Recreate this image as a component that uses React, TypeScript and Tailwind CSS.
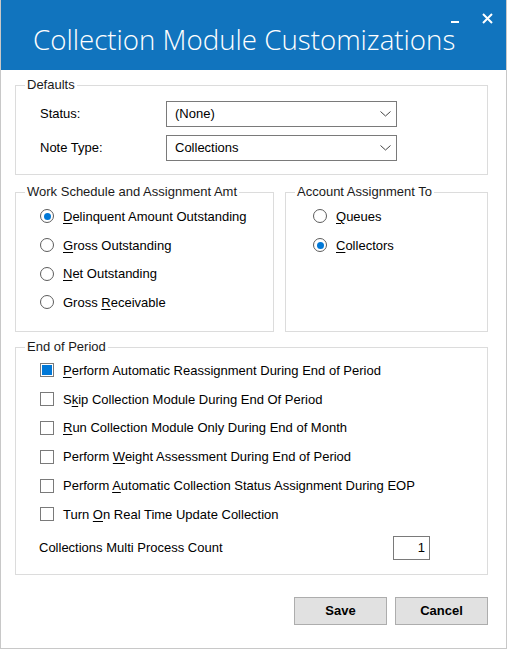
import React from 'react'

const ui = { fontFamily: '"Liberation Sans", Arial, sans-serif' }

function Mn({ text, at }: { text: string; at: number }) {
  // underline the mnemonic letter
  return (
    <>
      {text.slice(0, at)}
      <u className="underline-offset-[2px]">{text[at]}</u>
      {text.slice(at + 1)}
    </>
  )
}

function Radio({ checked, children }: { checked?: boolean; children: React.ReactNode }) {
  return (
    <div className="h-[28.7px] flex items-center gap-[9px]">
      <span className="w-[14px] h-[14px] rounded-full border border-[#5c5c5c] bg-white flex items-center justify-center shrink-0">
        {checked && <span className="w-[7px] h-[7px] rounded-full bg-[#0078d7]" />}
      </span>
      <span className="text-[13px] text-black leading-[15px]">{children}</span>
    </div>
  )
}

function Check({ checked, children }: { checked?: boolean; children: React.ReactNode }) {
  return (
    <div className="h-[28.8px] flex items-center gap-[9px]">
      <span className="w-[14px] h-[14px] border border-[#7a7a7a] bg-white flex items-center justify-center shrink-0">
        {checked && <span className="w-[10px] h-[10px] bg-[#0078d7]" />}
      </span>
      <span className="text-[13px] text-black leading-[15px]">{children}</span>
    </div>
  )
}

function Select({ value }: { value: string }) {
  return (
    <div className="w-[231px] h-[26px] border border-[#7a7a7a] bg-white flex items-center justify-between pl-[8px] pr-[5px]">
      <span className="text-[13px] text-black">{value}</span>
      <svg width="11" height="6" viewBox="0 0 11 6" fill="none">
        <path d="M0.5 0.5 L5.5 5 L10.5 0.5" stroke="#444" strokeWidth="1" />
      </svg>
    </div>
  )
}

function Group({ title, className, children }: { title: string; className?: string; children: React.ReactNode }) {
  return (
    <fieldset className={`border border-[#dcdcdc] pl-[9px] ${className ?? ''}`}>
      <legend className="px-[2px] text-[13px] leading-[14px] text-[#1a1a1a]">{title}</legend>
      {children}
    </fieldset>
  )
}

export default function App() {
  return (
    <div style={ui} className="w-[509px] h-[650px] bg-white">
      <div className="w-[507px] h-[649px] border-x border-b border-[#c8c8c8] bg-white flex flex-col">
        {/* title bar */}
        <div className="relative h-[70px] bg-[#1174be] shrink-0 flex items-end pl-[32px] pb-[16px]">
          <h1
            style={{ fontFamily: '"Open Sans", sans-serif' }}
            className="text-white text-[27.7px] font-light leading-none"
          >
            Collection Module Customizations
          </h1>
          <span className="absolute left-[450px] top-[21px] w-[8px] h-[2px] bg-white" />
          <svg className="absolute left-[481px] top-[13px]" width="11" height="11" viewBox="0 0 11 11">
            <path d="M1 1 L10 10 M10 1 L1 10" stroke="white" strokeWidth="2" />
          </svg>
        </div>

        <div className="pl-[14px] w-[487px] flex flex-col">
          {/* Defaults */}
          <Group title="Defaults" className="mt-[8px] pb-[13px]">
            <div className="pl-[15px] pt-[9px] flex flex-col gap-[8px]">
              <div className="flex items-center">
                <span className="w-[126px] text-[13px] text-black">Status:</span>
                <Select value="(None)" />
              </div>
              <div className="flex items-center">
                <span className="w-[126px] text-[13px] text-black">Note Type:</span>
                <Select value="Collections" />
              </div>
            </div>
          </Group>

          <div className="mt-[10px] flex gap-[11px]">
            <Group title="Work Schedule and Assignment Amt" className="w-[259px] h-[147px]">
              <div className="pl-[15px] pt-[3px]">
                <Radio checked><Mn text="Delinquent Amount Outstanding" at={0} /></Radio>
                <Radio><Mn text="Gross Outstanding" at={0} /></Radio>
                <Radio><Mn text="Net Outstanding" at={0} /></Radio>
                <Radio><Mn text="Gross Receivable" at={6} /></Radio>
              </div>
            </Group>
            <Group title="Account Assignment To" className="w-[203px] h-[147px]">
              <div className="pl-[18px] pt-[3px]">
                <Radio><Mn text="Queues" at={0} /></Radio>
                <Radio checked><Mn text="Collectors" at={0} /></Radio>
              </div>
            </Group>
          </div>

          <Group title="End of Period" className="mt-[8px] pb-[13px]">
            <div className="pl-[15px] pt-[2px]">
              <Check checked><Mn text="Perform Automatic Reassignment During End of Period" at={0} /></Check>
              <Check><Mn text="Skip Collection Module During End Of Period" at={1} /></Check>
              <Check><Mn text="Run Collection Module Only During End of Month" at={0} /></Check>
              <Check><Mn text="Perform Weight Assessment During End of Period" at={8} /></Check>
              <Check><Mn text="Perform Automatic Collection Status Assignment During EOP" at={8} /></Check>
              <Check><Mn text="Turn On Real Time Update Collection" at={5} /></Check>
              <div className="mt-[6px] h-[26px] flex items-center justify-between pr-[57px]">
                <span className="text-[13px] text-black -ml-[1px]">Collections Multi Process Count</span>
                <div className="w-[37px] h-[24px] border border-[#7a7a7a] flex items-center justify-end pr-[4px] text-[13px] text-black">
                  1
                </div>
              </div>
            </div>
          </Group>

          <div className="mt-[22px] flex justify-end gap-[8px]">
            <button className="w-[93px] h-[28px] bg-[#e1e1e1] border border-[#adadad] text-[13px] font-bold text-black">
              Save
            </button>
            <button className="w-[93px] h-[28px] bg-[#e1e1e1] border border-[#adadad] text-[13px] font-bold text-black">
              Cancel
            </button>
          </div>
        </div>
      </div>
    </div>
  )
}
